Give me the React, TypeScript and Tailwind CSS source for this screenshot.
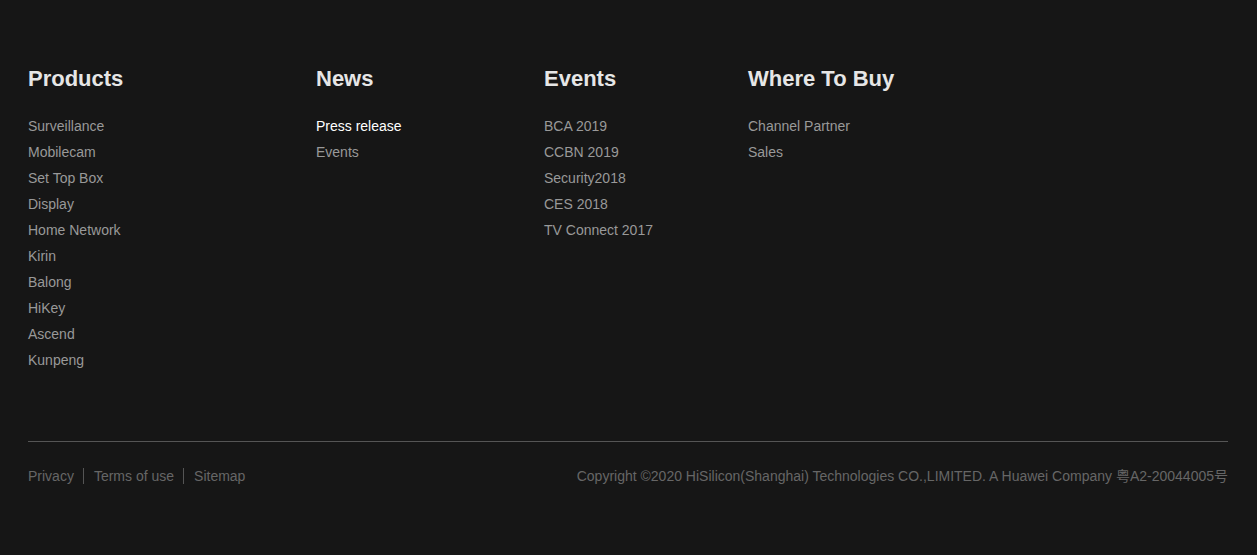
import React from "react";

const cols = [
  { title: "Products", w: "w-[288px]", items: ["Surveillance", "Mobilecam", "Set Top Box", "Display", "Home Network", "Kirin", "Balong", "HiKey", "Ascend", "Kunpeng"] },
  { title: "News", w: "w-[228px]", items: ["Press release", "Events"] },
  { title: "Events", w: "w-[204px]", items: ["BCA 2019", "CCBN 2019", "Security2018", "CES 2018", "TV Connect 2017"] },
  { title: "Where To Buy", w: "w-[240px]", items: ["Channel Partner", "Sales"] },
];

export default function App() {
  return (
    <div className="min-h-[555px] w-full bg-[#161616] pl-[28px] pr-[29px] pt-[68px]" style={{ fontFamily: '"Liberation Sans", Arial, "Noto Sans CJK SC", sans-serif' }}>
      <div className="flex">
        {cols.map((c) => (
          <div key={c.title} className={c.w}>
            <h3 className="text-[22px] leading-[22px] font-bold text-[#e6e6e6]">{c.title}</h3>
            <ul className="mt-[23px]">
              {c.items.map((it) => (
                <li key={it} className={`text-[14px] leading-[26px] ${it === "Press release" ? "text-white" : "text-[#999999]"}`}>{it}</li>
              ))}
            </ul>
          </div>
        ))}
      </div>
      <div className="mt-[68px] h-px w-full bg-[#555555]" />
      <div className="mt-[24px] flex items-center justify-between text-[14px] leading-[20px] text-[#666666]">
        <div className="flex items-center">
          <span>Privacy</span>
          <span className="ml-[9px] mr-[10px] h-[16px] w-px bg-[#555555]" />
          <span>Terms of use</span>
          <span className="ml-[9px] mr-[10px] h-[16px] w-px bg-[#555555]" />
          <span>Sitemap</span>
        </div>
        <div>Copyright ©2020 HiSilicon(Shanghai) Technologies CO.,LIMITED. A Huawei Company 粤A2-20044005号</div>
      </div>
    </div>
  );
}
